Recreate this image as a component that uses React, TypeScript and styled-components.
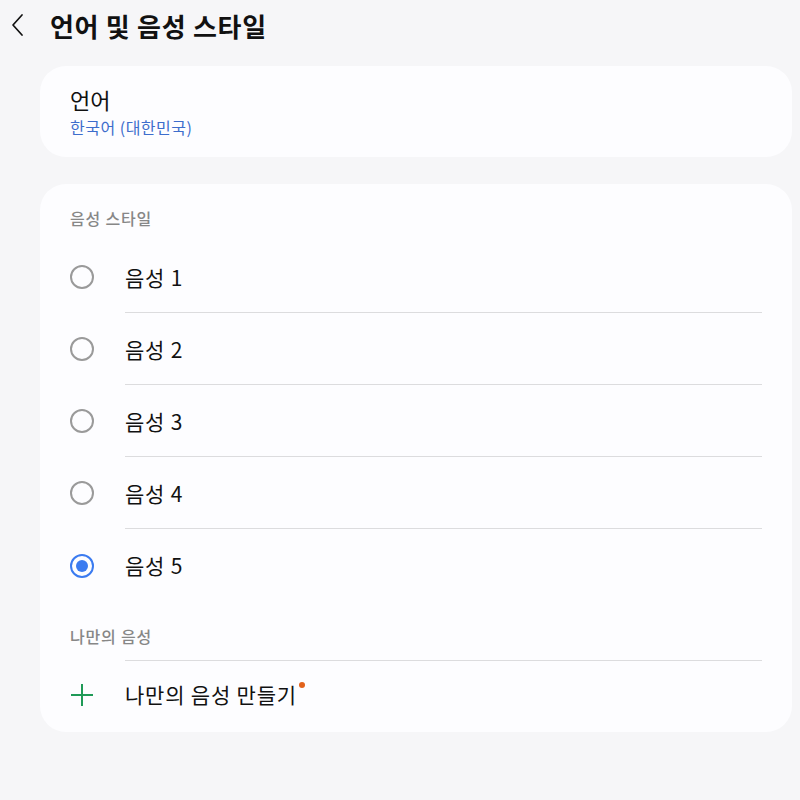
import styled, { createGlobalStyle } from "styled-components";

const GlobalStyle = createGlobalStyle`
  html, body {
    margin: 0;
    padding: 0;
    background: #f6f6f8;
  }
  body {
    font-family: "Noto Sans CJK KR", "Noto Sans", sans-serif;
    color: #111;
  }
`;

const Page = styled.div`
  width: 800px;
  height: 800px;
  box-sizing: border-box;
  padding: 0 8px 0 40px;
  background: #f6f6f8;
`;

const Header = styled.div`
  height: 50px;
  margin-left: -40px;
  display: flex;
  align-items: center;
`;

const BackButton = styled.button`
  width: 50px;
  height: 50px;
  padding: 0 0 0 10px;
  border: none;
  background: none;
  display: flex;
  align-items: center;
  color: #111;
`;

const Title = styled.h1`
  margin: 0;
  font-size: 26px;
  font-weight: 700;
  letter-spacing: 0.7px;
`;

const Card = styled.div<{ $gap: number }>`
  margin-top: ${(p) => p.$gap}px;
  background: #fdfdff;
  border-radius: 26px;
  padding: 0 30px;
`;

const LangCard = styled(Card)`
  height: 91px;
  display: flex;
  flex-direction: column;
  justify-content: center;
`;

const LangTitle = styled.div`
  font-size: 22px;
  line-height: 28px;
  margin-top: -1px;
`;

const LangValue = styled.div`
  margin-top: 3px;
  font-size: 16px;
  line-height: 22px;
  letter-spacing: 0.5px;
  color: #3d6dcc;
`;

const StyleCard = styled(Card)`
  padding-top: 22px;
  padding-bottom: 4px;
`;

const SectionLabel = styled.div<{ $before: number; $after: number }>`
  padding-top: ${(p) => p.$before}px;
  margin-bottom: ${(p) => p.$after}px;
  font-size: 16px;
  font-weight: 500;
  line-height: 24px;
  letter-spacing: 0.8px;
  color: #878787;
`;

const Row = styled.div`
  display: flex;
  align-items: stretch;
`;

const Lead = styled.div`
  width: 24px;
  margin-right: 31px;
  display: flex;
  align-items: center;
  justify-content: center;
`;

const RowBody = styled.div<{ $line: boolean; $height: number }>`
  flex: 1;
  height: ${(p) => p.$height}px;
  display: flex;
  align-items: center;
  font-size: 21px;
  letter-spacing: 0.8px;
  border-bottom: 1px solid ${(p) => (p.$line ? "#dcdcde" : "transparent")};
`;

const Radio = styled.span<{ $on: boolean }>`
  width: 24px;
  height: 24px;
  box-sizing: border-box;
  border-radius: 50%;
  border: 2px solid ${(p) => (p.$on ? "#3b7bf0" : "#9a9a9a")};
  display: flex;
  align-items: center;
  justify-content: center;
  &::after {
    content: "";
    display: ${(p) => (p.$on ? "block" : "none")};
    width: 12px;
    height: 12px;
    border-radius: 50%;
    background: #3b7bf0;
  }
`;

const Divider = styled.div`
  margin-left: 55px;
  height: 1px;
  background: #dcdcde;
`;

const NewBadge = styled.span`
  position: relative;
  &::after {
    content: "";
    position: absolute;
    right: -8px;
    top: 3px;
    width: 6px;
    height: 6px;
    border-radius: 50%;
    background: #e2621b;
  }
`;

const voices = ["음성 1", "음성 2", "음성 3", "음성 4", "음성 5"];

export default function App() {
  const selected = 4;
  return (
    <Page>
      <GlobalStyle />
      <Header>
        <BackButton aria-label="뒤로">
          <svg width="16" height="24" viewBox="0 0 16 24" fill="none">
            <path d="M12 2 L3 12 L12 22" stroke="#111" strokeWidth="1.7" strokeLinecap="round" strokeLinejoin="round" />
          </svg>
        </BackButton>
        <Title>언어 및 음성 스타일</Title>
      </Header>

      <LangCard $gap={16}>
        <LangTitle>언어</LangTitle>
        <LangValue>한국어 (대한민국)</LangValue>
      </LangCard>

      <StyleCard $gap={27}>
        <SectionLabel $before={0} $after={11}>음성 스타일</SectionLabel>
        {voices.map((v, i) => (
          <Row key={v}>
            <Lead>
              <Radio $on={i === selected} />
            </Lead>
            <RowBody $line={i < voices.length - 1} $height={i < voices.length - 1 ? 71 : 72}>
              {v}
            </RowBody>
          </Row>
        ))}
        <SectionLabel $before={22} $after={12}>나만의 음성</SectionLabel>
        <Divider />
        <Row>
          <Lead>
            <svg width="24" height="24" viewBox="0 0 24 24">
              <path d="M12 1 V23 M1 12 H23" stroke="#1f9a57" strokeWidth="2" />
            </svg>
          </Lead>
          <RowBody $line={false} $height={66}>
            <NewBadge>나만의 음성 만들기</NewBadge>
          </RowBody>
        </Row>
      </StyleCard>
    </Page>
  );
}
